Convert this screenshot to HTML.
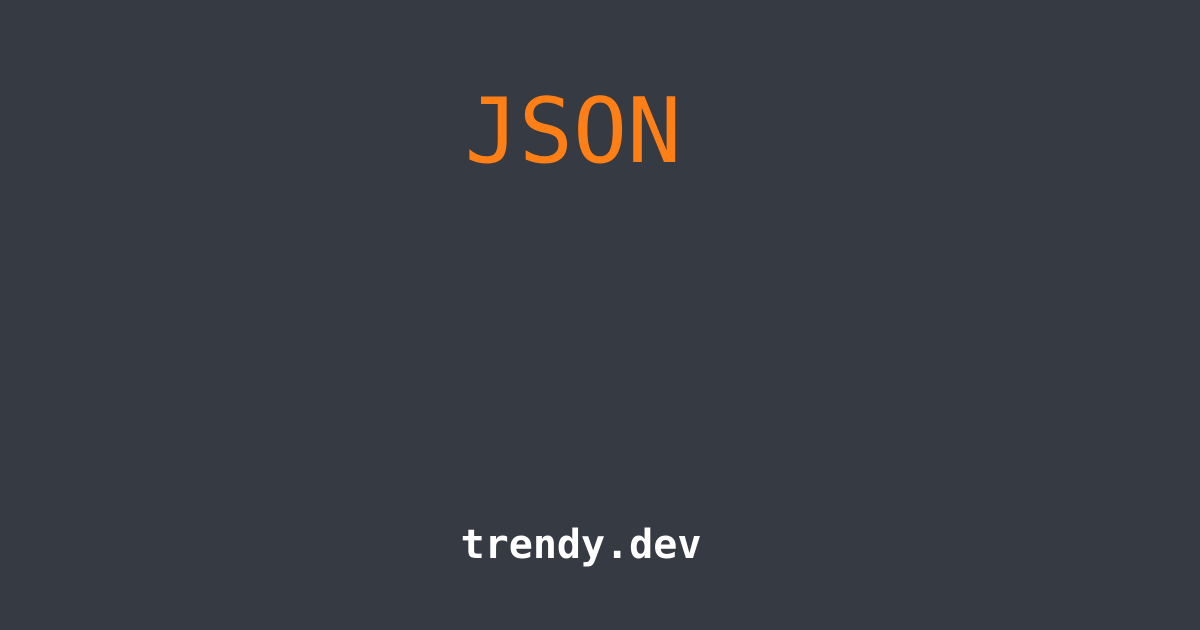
<!DOCTYPE html>
<html><head><style>
html,body{margin:0;padding:0;}
body{width:1200px;height:630px;background:#363a42;position:relative;overflow:hidden;font-family:"DejaVu Sans Mono","Liberation Mono",monospace;}
.t{position:absolute;left:0;width:1146px;text-align:center;top:80px;font-size:90px;line-height:104px;color:#ff7f17;}
.b{position:absolute;left:0;width:1162px;text-align:center;top:520px;font-size:40px;line-height:50px;color:#fff;font-weight:bold;}
</style></head><body>
<div class="t">JSON</div>
<div class="b">trendy.dev</div>
</body></html>
